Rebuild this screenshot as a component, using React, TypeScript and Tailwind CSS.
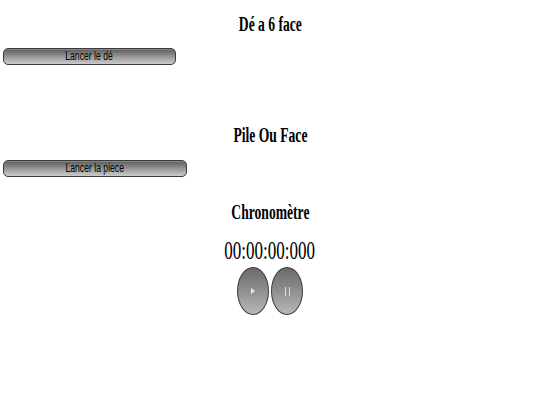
import React from 'react';

const btn =
  "block h-[17px] rounded-[5px] border border-[#3a3a3a] bg-linear-to-b from-[#5a5a5a] via-[#959595] to-[#cccccc] text-center font-['Liberation_Sans',sans-serif] text-[12px] leading-[15px] text-black shadow-[inset_0_1px_0_rgba(255,255,255,0.25)]";

function Title({ children }: { children: React.ReactNode }) {
  return (
    <h2 className="text-center text-[20px] leading-[23px] font-bold text-black">
      <span className="inline-block scale-x-[0.68]">{children}</span>
    </h2>
  );
}

function Round({ children }: { children: React.ReactNode }) {
  return (
    <button
      type="button"
      className="flex h-[48px] w-[32px] items-center justify-center rounded-[50%] border border-[#3c3c3c] bg-linear-to-b from-[#6a6a6a] to-[#b8b8b8]"
    >
      {children}
    </button>
  );
}

export default function App() {
  return (
    <div className="h-[405px] w-[540px] bg-white font-['Liberation_Serif',serif]">
      <div className="pt-[13px]">
        <Title>Dé a 6 face</Title>
      </div>
      <button type="button" className={`${btn} mt-[12px] ml-[3px] w-[173px]`}>
        <span className="inline-block scale-x-[0.72]">Lancer le dé</span>
      </button>

      <div className="pt-[59px]">
        <Title>Pile Ou Face</Title>
      </div>
      <button type="button" className={`${btn} mt-[13px] ml-[3px] w-[184px]`}>
        <span className="inline-block scale-x-[0.72]">Lancer la piece</span>
      </button>

      <div className="pt-[24px]">
        <Title>Chronomètre</Title>
      </div>
      <div className="mt-[12px] text-center text-[25px] leading-[29px] text-black">
        <span className="inline-block scale-x-[0.68]">00:00:00:000</span>
      </div>
      <div className="mt-[2px] flex justify-center gap-[2px]">
        <Round>
          <span className="block h-0 w-0 border-y-[3px] border-l-[4px] border-y-transparent border-l-[#e8e8e8]" />
        </Round>
        <Round>
          <span className="flex gap-[3px]">
            <span className="block h-[9px] w-px bg-[#dcdcdc]" />
            <span className="block h-[9px] w-px bg-[#dcdcdc]" />
          </span>
        </Round>
      </div>
    </div>
  );
}
